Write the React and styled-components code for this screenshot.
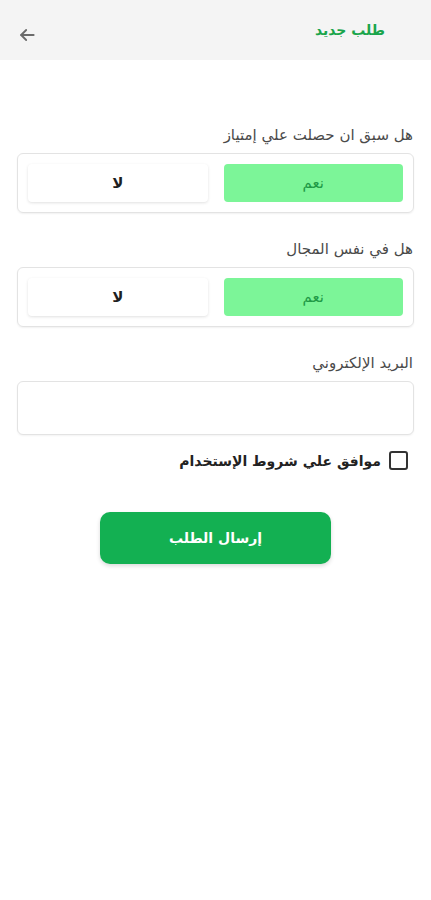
import React, { useState } from "react";
import styled, { createGlobalStyle } from "styled-components";

const Global = createGlobalStyle`
  html, body { margin: 0; padding: 0; background: #ffffff; }
  body { font-family: "DejaVu Sans", "Noto Sans", sans-serif; }
  * { box-sizing: border-box; }
`;

const Page = styled.div`
  direction: rtl;
  width: 431px;
  min-height: 900px;
  background: #ffffff;
`;

const Header = styled.header`
  height: 60px;
  background: #f4f4f4;
  display: flex;
  align-items: center;
  justify-content: space-between;
  padding-inline-start: 46px;
  padding-inline-end: 16px;
`;

const Title = styled.h1`
  margin: 0;
  font-size: 14px;
  font-weight: bold;
  color: #1aa54b;
`;

const BackButton = styled.button`
  border: 0;
  background: transparent;
  padding: 0;
  width: 22px;
  height: 22px;
  display: flex;
  align-items: center;
  justify-content: center;
  color: #6b6b6b;
  margin-top: 10px;
`;

const Form = styled.main`
  padding: 66px 17px 0 17px;
  display: flex;
  flex-direction: column;
`;

const Field = styled.section`
  display: flex;
  flex-direction: column;
  gap: 8px;
  margin-bottom: ${(p) => p.$mb ?? 27}px;
`;

const Label = styled.label`
  font-size: 15px;
  color: #4a4a4a;
  line-height: 19px;
  padding-right: 1px;
`;

const ChoiceBox = styled.div`
  height: 60px;
  border: 1px solid #e3e3e3;
  border-radius: 6px;
  padding: 10px 10px;
  display: grid;
  grid-template-columns: 1fr 1fr;
  gap: 16px;
  box-shadow: 0 1px 2px rgba(0, 0, 0, 0.06);
`;

const Choice = styled.button`
  border: 0;
  border-radius: 4px;
  font-family: inherit;
  font-size: 15px;
  font-weight: ${(p) => (p.$active ? "normal" : "bold")};
  background: ${(p) => (p.$active ? "#7cf598" : "#ffffff")};
  color: ${(p) => (p.$active ? "#1f9a46" : "#1f1f1f")};
  box-shadow: ${(p) =>
    p.$active ? "none" : "0 1px 3px rgba(0, 0, 0, 0.12)"};
  cursor: pointer;
`;

const Input = styled.input`
  height: 54px;
  border: 1px solid #e3e3e3;
  border-radius: 6px;
  padding: 0 12px;
  font-family: inherit;
  font-size: 14px;
  outline: none;
  box-shadow: 0 1px 2px rgba(0, 0, 0, 0.05);
`;

const CheckRow = styled.label`
  display: flex;
  align-items: center;
  gap: 8px;
  margin-top: 16px;
  padding-right: 6px;
  font-size: 14px;
  font-weight: bold;
  color: #222;
  cursor: pointer;
`;

const Box = styled.span`
  width: 19px;
  height: 19px;
  border: 2px solid #333;
  border-radius: 3px;
  display: inline-block;
  background: #fff;
`;

const Submit = styled.button`
  align-self: center;
  margin-top: 42px;
  width: 231px;
  height: 52px;
  border: 0;
  border-radius: 10px;
  background: #13b052;
  color: #ffffff;
  font-family: inherit;
  font-weight: bold;
  font-size: 14px;
  box-shadow: 0 2px 4px rgba(0, 0, 0, 0.15);
  cursor: pointer;
`;

function YesNo({ value, onChange }) {
  return (
    <ChoiceBox>
      <Choice $active={value === "yes"} onClick={() => onChange("yes")}>
        نعم
      </Choice>
      <Choice $active={value === "no"} onClick={() => onChange("no")}>
        لا
      </Choice>
    </ChoiceBox>
  );
}

export default function App() {
  const [a, setA] = useState("yes");
  const [b, setB] = useState("yes");
  return (
    <Page>
      <Global />
      <Header>
        <Title>طلب جديد</Title>
        <BackButton aria-label="back">
          <svg width="20" height="20" viewBox="0 0 24 24" fill="none" stroke="currentColor" strokeWidth="2.2" strokeLinecap="round" strokeLinejoin="round">
            <path d="M20 12H5" />
            <path d="M11 6l-6 6 6 6" />
          </svg>
        </BackButton>
      </Header>
      <Form>
        <Field>
          <Label>هل سبق ان حصلت علي إمتياز</Label>
          <YesNo value={a} onChange={setA} />
        </Field>
        <Field>
          <Label>هل في نفس المجال</Label>
          <YesNo value={b} onChange={setB} />
        </Field>
        <Field $mb={0}>
          <Label>البريد الإلكتروني</Label>
          <Input type="email" />
        </Field>
        <CheckRow>
          <Box />
          موافق علي شروط الإستخدام
        </CheckRow>
        <Submit>إرسال الطلب</Submit>
      </Form>
    </Page>
  );
}
